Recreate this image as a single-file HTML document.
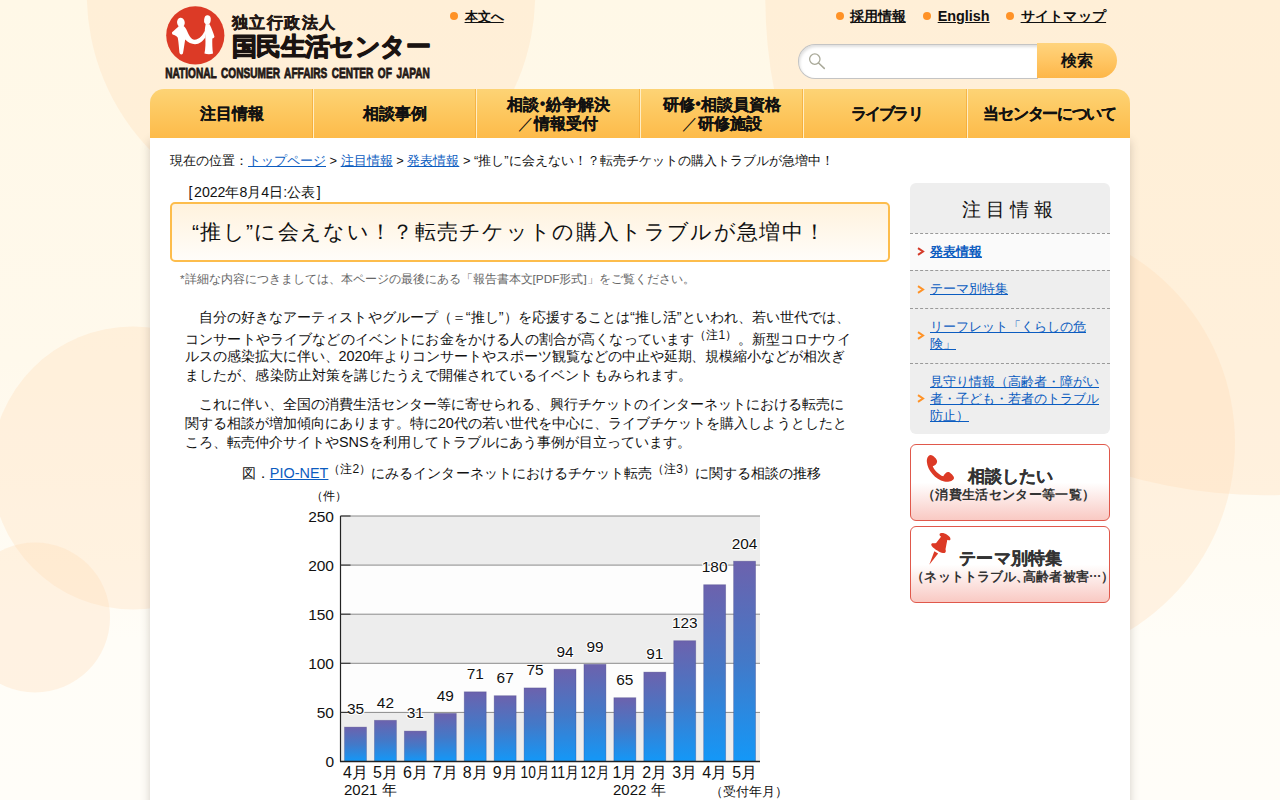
<!DOCTYPE html>
<html lang="ja">
<head>
<meta charset="utf-8">
<title>“推し”に会えない！？転売チケットの購入トラブルが急増中！</title>
<style>
*{box-sizing:border-box;}
html,body{margin:0;padding:0;}
body{width:1280px;height:800px;overflow:hidden;position:relative;background:#fff8e7;font-family:"Liberation Sans",sans-serif;color:#111;font-size:15px;}
a{color:#0b5cc0;text-decoration:underline;}
.bg{position:absolute;left:0;top:0;width:1280px;height:800px;z-index:0;}
#wrap{position:absolute;left:150px;top:0;width:980px;height:800px;z-index:1;}
#page{position:absolute;left:0;top:138px;width:980px;height:680px;background:#fff;box-shadow:0 3px 9px rgba(70,60,50,.24);}
/* header */
#logo{position:absolute;left:15px;top:5px;width:268px;height:76px;}
.hl{position:absolute;line-height:17px;font-weight:bold;font-size:14.4px;color:#111;white-space:nowrap;}
.hl a{color:#111;}
.bul{position:absolute;width:8px;height:8px;border-radius:50%;background:#ff9226;}
#search{position:absolute;left:648px;top:44px;width:319px;height:34px;}
#search .inp{position:absolute;left:0;top:0;width:240px;height:34.5px;border:1px solid #c4c4c4;border-right:none;border-radius:17px 0 0 17px;background:#fff;box-shadow:inset 1px 2px 3px rgba(0,0,0,.13);}
#search .btn{position:absolute;left:239px;top:-1.2px;width:79.8px;height:35.3px;border-radius:0 17.5px 17.5px 0;background:linear-gradient(#ffd47e,#ffc664 50%,#fdb648);font-weight:bold;font-size:15.6px;text-align:center;line-height:35px;color:#111;}
/* nav */
#nav{position:absolute;left:0;top:89px;width:980px;height:49px;border-radius:14px 14px 0 0;background:linear-gradient(#fdd375 0%,#fdc75e 50%,#fdbb4a 100%);display:flex;overflow:hidden;}
#nav div{flex:0 0 auto;height:49px;border-right:1px solid #ffedc4;box-shadow:inset -2px 0 0 -1px rgba(240,160,40,.55);font-weight:bold;font-size:16px;color:#111;display:flex;align-items:center;justify-content:center;text-align:center;line-height:19px;}
#nav div:last-child{border-right:none;box-shadow:none;}
#nav div{-webkit-text-stroke:0.2px #111;}
#nav span{display:inline-block;}
#nav i{font-style:normal;}
#nav i.d{margin:0 0.6px;font-size:16px;position:relative;top:-0.5px;-webkit-text-stroke:0;}
#nav i.sl{font-weight:normal;-webkit-text-stroke:0;}
/* breadcrumb */
#crumb{position:absolute;left:20px;top:152px;font-size:12.87px;white-space:nowrap;line-height:17px;}
/* main */
#main{position:absolute;left:20px;top:183px;width:720px;}
#date{position:absolute;left:18.5px;top:1px;font-size:14.15px;line-height:17px;white-space:nowrap;}
#title{position:absolute;left:0;top:19px;width:720px;height:60px;border:2px solid #fdbd4c;border-radius:5px;background:linear-gradient(#fff2dd,#fffdf9);}
#title h1{margin:0;position:absolute;left:20px;top:15px;font-size:21px;font-weight:normal;letter-spacing:1.32px;line-height:26px;white-space:nowrap;color:#111;}
#note{position:absolute;left:10px;top:89px;font-size:11.8px;color:#666;white-space:nowrap;line-height:14px;}
.p{position:absolute;left:15px;width:700px;font-size:15px;line-height:19px;color:#111;}
.p span.l{display:block;white-space:nowrap;}
.ln{position:absolute;left:15px;font-size:14.4px;line-height:19px;white-space:nowrap;color:#111;}
.cap{position:absolute;left:0;width:720px;text-align:center;font-size:14.4px;line-height:19px;white-space:nowrap;color:#111;}
sup{font-size:12px;line-height:0;vertical-align:5px;}
#chartbox{position:absolute;left:135px;top:305px;width:480px;height:320px;}
#chart{display:block;}
/* sidebar */
#side{position:absolute;left:760px;top:183px;width:200px;}
#snav{position:absolute;left:0;top:0;width:200px;height:251px;background:#eee;border-radius:6px;overflow:hidden;}
#snav h2{margin:0;height:50px;line-height:53px;text-align:center;font-size:19px;font-weight:normal;letter-spacing:5px;color:#111;white-space:nowrap;}
#snav .it{position:relative;border-top:1px dashed #999;font-size:12.85px;line-height:17px;padding:0 0 2px 20px;display:flex;align-items:center;white-space:nowrap;}
#snav .ar{position:absolute;left:7px;top:50%;margin-top:-5px;}
#snav .it.cur{background:#fafafa;font-weight:bold;}
.sbtn{position:absolute;left:0;width:200px;height:76.5px;border:1px solid #e0584b;border-radius:6px;background:linear-gradient(#fff 0%,#fff 50%,#f9c9c3 100%);overflow:hidden;}
.sbtn .t1{position:absolute;white-space:nowrap;font-weight:bold;font-size:17px;color:#333;line-height:20px;-webkit-text-stroke:0.25px #333;}
.sbtn .pl{margin-left:-6.5px;}
.sbtn .pr{margin-right:-6.5px;}
.sbtn .t2{position:absolute;white-space:nowrap;font-weight:bold;font-size:13px;color:#333;line-height:16px;}
</style>
</head>
<body>
<svg class="bg" viewBox="0 0 1280 800">
  <defs><linearGradient id="bgg" x1="0" y1="0" x2="0" y2="1"><stop offset="0" stop-color="#fff8e7"/><stop offset="0.45" stop-color="#fff9ec"/><stop offset="0.8" stop-color="#fffdf7"/><stop offset="1" stop-color="#fffdf8"/></linearGradient></defs>
  <rect width="1280" height="800" fill="url(#bgg)"/>
  <g fill="#ffdcb4" fill-opacity="0.30">
    <circle cx="311" cy="-6" r="224.2"/>
    <circle cx="1264" cy="-3.5" r="498.7"/>
    <circle cx="1015" cy="442.5" r="220"/>
    <circle cx="133" cy="468" r="141.5"/>
    <circle cx="35" cy="617.5" r="75"/>
  </g>
</svg>
<div id="wrap">
  <div id="page"></div>
  <svg id="logo" viewBox="0 0 268 76">
    <circle cx="30.3" cy="30.4" r="29.1" fill="#dc3a26"/>
    <g transform="translate(-5,-5) scale(0.0875)" fill="#fff">
      <ellipse cx="239" cy="258" rx="44" ry="55" transform="rotate(-8 239 258)"/>
      <path d="M212 300 C200 315 170 340 138 368 C134 380 140 392 152 398 C175 405 195 415 203 432 C212 480 218 560 222 600 C226 625 250 628 262 610 C272 560 280 500 288 452 C320 485 360 505 400 505 C450 503 490 470 518 428 L512 352 C490 400 450 452 395 455 C350 452 330 400 300 335 C292 315 278 300 268 296 Z"/>
      <ellipse cx="542" cy="228" rx="38" ry="53" transform="rotate(6 542 228)"/>
      <path d="M522 275 C518 300 512 330 512 352 L518 428 C522 480 520 560 508 612 C540 622 580 622 606 612 C598 560 596 490 598 440 C612 436 622 428 622 416 C612 380 590 320 566 276 Z"/>
    </g>
    <text x="67" y="23" font-family="Liberation Sans, sans-serif" font-weight="bold" font-size="16" textLength="103" fill="#231815" stroke="#231815" stroke-width="0.45">独立行政法人</text>
    <text x="67" y="50" font-family="Liberation Sans, sans-serif" font-weight="bold" font-size="24.5" textLength="198.5" fill="#1a1311" stroke="#1a1311" stroke-width="1.25" stroke-linejoin="round">国民生活センター</text>
    <text x="0.3" y="73" font-family="Liberation Sans, sans-serif" font-weight="bold" font-size="14.4" word-spacing="2.5" textLength="264.6" lengthAdjust="spacingAndGlyphs" fill="#231815" stroke="#231815" stroke-width="0.8">NATIONAL CONSUMER AFFAIRS CENTER OF JAPAN</text>
  </svg>
  <div class="hl" style="left:314.6px;top:8px;font-size:13.1px;"><a>本文へ</a></div>
  <div class="hl" style="left:700.3px;top:8px;letter-spacing:-0.15px"><a>採用情報</a></div>
  <div class="hl" style="left:787.7px;top:8px;"><a>English</a></div>
  <div class="hl" style="left:870.6px;top:8px;letter-spacing:0.25px"><a>サイトマップ</a></div>
  <div class="bul" style="left:300px;top:12.1px"></div><div class="bul" style="left:686px;top:11.7px"></div><div class="bul" style="left:773.1px;top:11.7px"></div><div class="bul" style="left:856.2px;top:11.7px"></div>
  <div id="search"><div class="inp"></div><div class="btn">検索</div><svg style="position:absolute;left:8px;top:6px" width="22" height="22" viewBox="0 0 22 22"><circle cx="8.8" cy="9.1" r="5.2" fill="none" stroke="#a9a999" stroke-width="1.3"/><path d="M12.6 13 L18.3 18.4" stroke="#a9a999" stroke-width="1.5" stroke-linecap="round"/></svg></div>
  <div id="nav">
    <div style="width:164px">注目情報</div>
    <div style="width:163px">相談事例</div>
    <div style="width:164px"><span>相談<i class="d">•</i>紛争解決<br><i class="sl">／</i>情報受付</span></div>
    <div style="width:163px"><span>研修<i class="d">•</i>相談員資格<br><i class="sl">／</i>研修施設</span></div>
    <div style="width:164px"><span style="letter-spacing:-1.9px;margin-right:-1.9px">ライブラリ</span></div>
    <div style="width:162px"><span style="letter-spacing:-1.3px;margin-right:-1.3px">当センターについて</span></div>
  </div>
  <div id="crumb">現在の位置：<a>トップページ</a> &gt; <a>注目情報</a> &gt; <a>発表情報</a> &gt; “推し”に会えない！？転売チケットの購入トラブルが急増中！</div>
  <div id="main">
    <div id="date">[<span style="margin:0 1.6px">2022年8月4日:公表</span>]</div>
    <div id="title"><h1>“推し”に会えない！？転売チケットの購入トラブルが急増中！</h1></div>
    <div id="note">*詳細な内容につきましては、本ページの最後にある「報告書本文[PDF形式]」をご覧ください。</div>
    <div class="ln" style="top:125px;letter-spacing:0.04px">　自分の好きなアーティストやグループ（＝“推し”）を応援することは“推し活”といわれ、若い世代では、</div>
    <div class="ln" style="top:146.5px;letter-spacing:0.147px">コンサートやライブなどのイベントにお金をかける人の割合が高くなっています<sup>（注1）</sup>。新型コロナウイ</div>
    <div class="ln" style="top:164px;letter-spacing:-0.04px">ルスの感染拡大に伴い、2020年よりコンサートやスポーツ観覧などの中止や延期、規模縮小などが相次ぎ</div>
    <div class="ln" style="top:183px;letter-spacing:0.089px">ましたが、感染防止対策を講じたうえで開催されているイベントもみられます。</div>
    <div class="ln" style="top:212px;letter-spacing:0.02px">　これに伴い、全国の消費生活センター等に寄せられる、興行チケットのインターネットにおける転売に</div>
    <div class="ln" style="top:231px;letter-spacing:0.035px">関する相談が増加傾向にあります。特に20代の若い世代を中心に、ライブチケットを購入しようとしたと</div>
    <div class="ln" style="top:250px">ころ、転売仲介サイトやSNSを利用してトラブルにあう事例が目立っています。</div>
    <div class="cap" style="top:281px;left:1.5px;letter-spacing:0.04px">図．<a>PIO-NET</a><sup>（注2）</sup>にみるインターネットにおけるチケット転売<sup>（注3）</sup>に関する相談の推移</div>
    <div id="chartbox"><svg id="chart" viewBox="0 0 480 320" width="480" height="320" font-family="Liberation Sans, sans-serif">
<defs><linearGradient id="bg1" x1="0" y1="0" x2="0" y2="1"><stop offset="0" stop-color="#6c62ad"/><stop offset="0.5" stop-color="#4379c8"/><stop offset="1" stop-color="#1398f8"/></linearGradient></defs>
<rect x="35.5" y="28.0" width="419.5" height="49.1" fill="#ededed"/>
<rect x="35.5" y="77.1" width="419.5" height="49.1" fill="#fdfdfd"/>
<rect x="35.5" y="126.2" width="419.5" height="49.1" fill="#ededed"/>
<rect x="35.5" y="175.3" width="419.5" height="49.1" fill="#fdfdfd"/>
<rect x="35.5" y="224.4" width="419.5" height="49.1" fill="#ededed"/>
<line x1="35.5" y1="224.4" x2="455.0" y2="224.4" stroke="#8a8a8a" stroke-width="1"/>
<line x1="35.5" y1="175.3" x2="455.0" y2="175.3" stroke="#8a8a8a" stroke-width="1"/>
<line x1="35.5" y1="126.2" x2="455.0" y2="126.2" stroke="#8a8a8a" stroke-width="1"/>
<line x1="35.5" y1="77.1" x2="455.0" y2="77.1" stroke="#8a8a8a" stroke-width="1"/>
<line x1="35.5" y1="28.0" x2="455.0" y2="28.0" stroke="#8a8a8a" stroke-width="1"/>
<rect x="39.50" y="239.1" width="22" height="34.4" fill="url(#bg1)" stroke="#3a3a7a" stroke-opacity="0.35" stroke-width="0.8"/>
<text x="50.50" y="226.4" font-size="15.4" stroke="#fff" stroke-width="2.2" paint-order="stroke" stroke-linejoin="round" text-anchor="middle" fill="#111">35</text>
<text x="50.50" y="290.0" font-size="16" text-anchor="middle" fill="#111">4月</text>
<rect x="69.43" y="232.3" width="22" height="41.2" fill="url(#bg1)" stroke="#3a3a7a" stroke-opacity="0.35" stroke-width="0.8"/>
<text x="80.43" y="219.6" font-size="15.4" stroke="#fff" stroke-width="2.2" paint-order="stroke" stroke-linejoin="round" text-anchor="middle" fill="#111">42</text>
<text x="80.43" y="290.0" font-size="16" text-anchor="middle" fill="#111">5月</text>
<rect x="99.36" y="243.1" width="22" height="30.4" fill="url(#bg1)" stroke="#3a3a7a" stroke-opacity="0.35" stroke-width="0.8"/>
<text x="110.36" y="230.4" font-size="15.4" stroke="#fff" stroke-width="2.2" paint-order="stroke" stroke-linejoin="round" text-anchor="middle" fill="#111">31</text>
<text x="110.36" y="290.0" font-size="16" text-anchor="middle" fill="#111">6月</text>
<rect x="129.29" y="225.4" width="22" height="48.1" fill="url(#bg1)" stroke="#3a3a7a" stroke-opacity="0.35" stroke-width="0.8"/>
<text x="140.29" y="212.7" font-size="15.4" stroke="#fff" stroke-width="2.2" paint-order="stroke" stroke-linejoin="round" text-anchor="middle" fill="#111">49</text>
<text x="140.29" y="290.0" font-size="16" text-anchor="middle" fill="#111">7月</text>
<rect x="159.22" y="203.8" width="22" height="69.7" fill="url(#bg1)" stroke="#3a3a7a" stroke-opacity="0.35" stroke-width="0.8"/>
<text x="170.22" y="191.1" font-size="15.4" stroke="#fff" stroke-width="2.2" paint-order="stroke" stroke-linejoin="round" text-anchor="middle" fill="#111">71</text>
<text x="170.22" y="290.0" font-size="16" text-anchor="middle" fill="#111">8月</text>
<rect x="189.15" y="207.7" width="22" height="65.8" fill="url(#bg1)" stroke="#3a3a7a" stroke-opacity="0.35" stroke-width="0.8"/>
<text x="200.15" y="195.0" font-size="15.4" stroke="#fff" stroke-width="2.2" paint-order="stroke" stroke-linejoin="round" text-anchor="middle" fill="#111">67</text>
<text x="200.15" y="290.0" font-size="16" text-anchor="middle" fill="#111">9月</text>
<rect x="219.08" y="199.9" width="22" height="73.7" fill="url(#bg1)" stroke="#3a3a7a" stroke-opacity="0.35" stroke-width="0.8"/>
<text x="230.08" y="187.2" font-size="15.4" stroke="#fff" stroke-width="2.2" paint-order="stroke" stroke-linejoin="round" text-anchor="middle" fill="#111">75</text>
<text x="230.08" y="290.0" font-size="16" text-anchor="middle" textLength="29" lengthAdjust="spacingAndGlyphs" fill="#111">10月</text>
<rect x="249.01" y="181.2" width="22" height="92.3" fill="url(#bg1)" stroke="#3a3a7a" stroke-opacity="0.35" stroke-width="0.8"/>
<text x="260.01" y="168.5" font-size="15.4" stroke="#fff" stroke-width="2.2" paint-order="stroke" stroke-linejoin="round" text-anchor="middle" fill="#111">94</text>
<text x="260.01" y="290.0" font-size="16" text-anchor="middle" textLength="29" lengthAdjust="spacingAndGlyphs" fill="#111">11月</text>
<rect x="278.94" y="176.3" width="22" height="97.2" fill="url(#bg1)" stroke="#3a3a7a" stroke-opacity="0.35" stroke-width="0.8"/>
<text x="289.94" y="163.6" font-size="15.4" stroke="#fff" stroke-width="2.2" paint-order="stroke" stroke-linejoin="round" text-anchor="middle" fill="#111">99</text>
<text x="289.94" y="290.0" font-size="16" text-anchor="middle" textLength="29" lengthAdjust="spacingAndGlyphs" fill="#111">12月</text>
<rect x="308.87" y="209.7" width="22" height="63.8" fill="url(#bg1)" stroke="#3a3a7a" stroke-opacity="0.35" stroke-width="0.8"/>
<text x="319.87" y="197.0" font-size="15.4" stroke="#fff" stroke-width="2.2" paint-order="stroke" stroke-linejoin="round" text-anchor="middle" fill="#111">65</text>
<text x="319.87" y="290.0" font-size="16" text-anchor="middle" fill="#111">1月</text>
<rect x="338.80" y="184.1" width="22" height="89.4" fill="url(#bg1)" stroke="#3a3a7a" stroke-opacity="0.35" stroke-width="0.8"/>
<text x="349.80" y="171.4" font-size="15.4" stroke="#fff" stroke-width="2.2" paint-order="stroke" stroke-linejoin="round" text-anchor="middle" fill="#111">91</text>
<text x="349.80" y="290.0" font-size="16" text-anchor="middle" fill="#111">2月</text>
<rect x="368.73" y="152.7" width="22" height="120.8" fill="url(#bg1)" stroke="#3a3a7a" stroke-opacity="0.35" stroke-width="0.8"/>
<text x="379.73" y="140.0" font-size="15.4" stroke="#fff" stroke-width="2.2" paint-order="stroke" stroke-linejoin="round" text-anchor="middle" fill="#111">123</text>
<text x="379.73" y="290.0" font-size="16" text-anchor="middle" fill="#111">3月</text>
<rect x="398.66" y="96.7" width="22" height="176.8" fill="url(#bg1)" stroke="#3a3a7a" stroke-opacity="0.35" stroke-width="0.8"/>
<text x="409.66" y="84.0" font-size="15.4" stroke="#fff" stroke-width="2.2" paint-order="stroke" stroke-linejoin="round" text-anchor="middle" fill="#111">180</text>
<text x="409.66" y="290.0" font-size="16" text-anchor="middle" fill="#111">4月</text>
<rect x="428.59" y="73.2" width="22" height="200.3" fill="url(#bg1)" stroke="#3a3a7a" stroke-opacity="0.35" stroke-width="0.8"/>
<text x="439.59" y="60.5" font-size="15.4" stroke="#fff" stroke-width="2.2" paint-order="stroke" stroke-linejoin="round" text-anchor="middle" fill="#111">204</text>
<text x="439.59" y="290.0" font-size="16" text-anchor="middle" fill="#111">5月</text>
<line x1="35.5" y1="28.0" x2="35.5" y2="273.5" stroke="#222" stroke-width="1.2"/>
<line x1="35.0" y1="273.5" x2="455.0" y2="273.5" stroke="#222" stroke-width="1.4"/>
<line x1="35.5" y1="224.4" x2="45.5" y2="224.4" stroke="#333" stroke-width="1.1"/><line x1="35.5" y1="175.3" x2="45.5" y2="175.3" stroke="#333" stroke-width="1.1"/><line x1="35.5" y1="126.2" x2="45.5" y2="126.2" stroke="#333" stroke-width="1.1"/><line x1="35.5" y1="77.1" x2="45.5" y2="77.1" stroke="#333" stroke-width="1.1"/><line x1="35.5" y1="28.0" x2="45.5" y2="28.0" stroke="#333" stroke-width="1.1"/><text x="29.0" y="279.0" font-size="15.5" text-anchor="end" fill="#111">0</text>
<text x="29.0" y="229.9" font-size="15.5" text-anchor="end" fill="#111">50</text>
<text x="29.0" y="180.8" font-size="15.5" text-anchor="end" fill="#111">100</text>
<text x="29.0" y="131.7" font-size="15.5" text-anchor="end" fill="#111">150</text>
<text x="29.0" y="82.6" font-size="15.5" text-anchor="end" fill="#111">200</text>
<text x="29.0" y="33.5" font-size="15.5" text-anchor="end" fill="#111">250</text>
<text x="5.5" y="12.0" font-size="12.3" fill="#111">（件）</text>
<text x="39.0" y="307.0" font-size="15" fill="#111">2021 年</text>
<text x="308.0" y="307.0" font-size="15" fill="#111">2022 年</text>
<text x="405.0" y="308.0" font-size="12.6" fill="#111">（受付年月）</text>
</svg></div>
  </div>
  <div id="side">
    <div id="snav">
      <h2>注目情報</h2>
      <div class="it cur" style="height:37px"><svg class="ar" width="8" height="9" viewBox="0 0 8 9"><path d="M1 1.2 L6 4.5 L1 7.8" fill="none" stroke="#d43a28" stroke-width="2" stroke-linejoin="miter"/></svg><a>発表情報</a></div>
      <div class="it" style="height:38px"><svg class="ar" width="8" height="9" viewBox="0 0 8 9"><path d="M1 1.2 L6 4.5 L1 7.8" fill="none" stroke="#ff9226" stroke-width="2" stroke-linejoin="miter"/></svg><a>テーマ別特集</a></div>
      <div class="it" style="height:55px"><svg class="ar" width="8" height="9" viewBox="0 0 8 9"><path d="M1 1.2 L6 4.5 L1 7.8" fill="none" stroke="#ff9226" stroke-width="2" stroke-linejoin="miter"/></svg><a>リーフレット「くらしの危<br>険」</a></div>
      <div class="it" style="height:71px"><svg class="ar" width="8" height="9" viewBox="0 0 8 9"><path d="M1 1.2 L6 4.5 L1 7.8" fill="none" stroke="#ff9226" stroke-width="2" stroke-linejoin="miter"/></svg><a>見守り情報（高齢者・障がい<br>者・子ども・若者のトラブル<br>防止）</a></div>
    </div>
    <div class="sbtn" style="top:261px">
      <svg style="position:absolute;left:0;top:0" width="60" height="60" viewBox="0 0 60 60"><g transform="translate(7,3) scale(0.0625)" fill="#dc3a26"><path d="M200 113 C160 118 138 170 142 222 C150 352 280 502 420 537 C482 552 562 532 577 480 C577 450 522 393 490 384 C458 378 430 408 404 452 C330 428 252 340 236 290 C272 280 307 250 306 210 C300 178 250 118 200 113 Z"/></g></svg>
      <div class="t1" style="left:56.5px;top:21.5px;font-size:16.6px">相談したい</div>
      <div class="t2" style="left:17.6px;top:42px;font-size:13.2px;letter-spacing:0.33px"><span class="pl">（</span>消費生活センター等一覧<span class="pr">）</span></div>
    </div>
    <div class="sbtn" style="top:343px">
      <svg style="position:absolute;left:0;top:0" width="60" height="60" viewBox="0 0 60 60"><g transform="translate(7,1) scale(0.0625)" fill="#dc3a26"><path d="M345 100 C360 70 420 80 470 110 C510 135 530 170 515 190 C500 205 450 190 410 165 C370 140 335 120 345 100 Z"/><path d="M380 125 L470 185 L440 340 C450 370 445 395 425 400 C380 405 300 360 240 310 C205 280 205 255 225 245 C250 240 270 245 290 240 Z"/><path d="M262 372 L322 408 L180 588 Z"/></g></svg>
      <div class="t1" style="left:48.3px;top:21.5px;font-size:17.1px;letter-spacing:0.15px">テーマ別特集</div>
      <div class="t2" style="left:6.8px;top:42px;font-size:12.6px;letter-spacing:0.1px"><span class="pl">（</span>ネットトラブル<span style="margin-right:-6px">、</span>高齢者被害<span style="position:relative;top:-4.5px">…</span><span class="pr">）</span></div>
    </div>
  </div>
</div>
</body>
</html>
